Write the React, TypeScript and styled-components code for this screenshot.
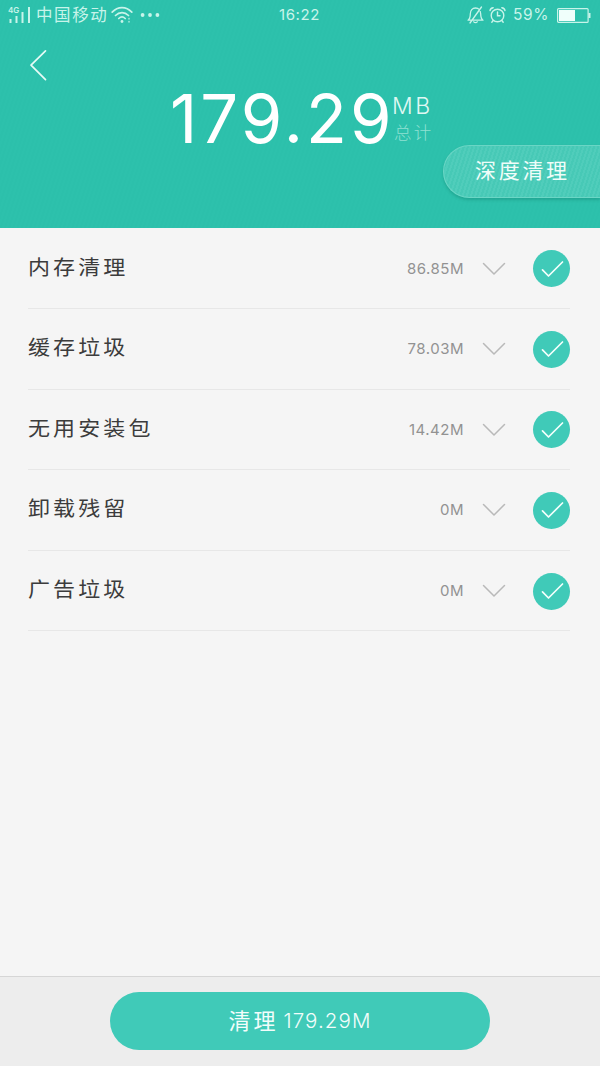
import React from 'react';
import styled, { createGlobalStyle } from 'styled-components';

const Global = createGlobalStyle`
  * { box-sizing: border-box; }
  body { margin: 0; background: #f5f5f5; font-family: Inter, "Noto Sans CJK SC", sans-serif; }
  svg { display: block; flex: none; }
`;

const Screen = styled.main`
  width: 600px;
  height: 1066px;
  display: flex;
  flex-direction: column;
  background: #f5f5f5;
  overflow: hidden;
`;

const Header = styled.header`
  position: relative;
  height: 228px;
  flex: none;
  background: repeating-linear-gradient(108deg, #2dc1ac 0 2px, #2cc0ab 2px 4px);
  color: #fff;
`;

const StatusBar = styled.div`
  display: grid;
  grid-template-columns: 1fr auto 1fr;
  align-items: center;
  height: 30px;
  padding: 0 9px 0 8px;
  color: #c8f4ea;
`;

const StatusGroup = styled.div<{ $end?: boolean }>`
  display: flex;
  align-items: center;
  justify-content: ${p => (p.$end ? 'flex-end' : 'flex-start')};
`;

const Carrier = styled.span`
  margin: 0 3px 0 5px;
  font-size: 16.5px;
  line-height: 20px;
  letter-spacing: 1.6px;
  font-weight: 400;
  white-space: nowrap;
`;

const Clock = styled.span`
  font-size: 15px;
  line-height: 20px;
  letter-spacing: 0.6px;
`;

const Percent = styled.span`
  margin: 0 8px 0 7px;
  font-size: 15.5px;
  line-height: 20px;
  letter-spacing: 0.6px;
`;

const BackButton = styled.button`
  display: block;
  margin: 18px 0 0 28px;
  padding: 0;
  border: 0;
  background: none;
  color: #e6fbf6;
`;

const Total = styled.div`
  display: flex;
  margin: 1px 0 0 170px;
  height: 72px;
`;

const TotalValue = styled.span`
  font-size: 67px;
  line-height: 72px;
  font-weight: 400;
  width: 222px;
  letter-spacing: 3.1px;
  white-space: nowrap;
`;

const TotalSide = styled.div`
  display: flex;
  flex-direction: column;
  padding-top: 11px;
`;

const Unit = styled.span`
  font-size: 23px;
  line-height: 24px;
  font-weight: 300;
  letter-spacing: 2.6px;
  color: #e0f8f3;
`;

const Caption = styled.span`
  padding-left: 2px;
  font-size: 17.5px;
  line-height: 30px;
  font-weight: 300;
  letter-spacing: 2.2px;
  color: #8fe0d2;
`;

const DeepClean = styled.button`
  position: absolute;
  right: 0;
  top: 145px;
  width: 157px;
  height: 53px;
  padding: 0 0 2px 31px;
  border: 1px solid #6ad6c5;
  border-right: 0;
  border-radius: 27px 0 0 27px;
  background: repeating-linear-gradient(108deg, #50cdbb 0 2px, #47c9b6 2px 4px);
  box-shadow: 0 2px 3px rgba(0, 90, 75, 0.25);
  color: #effdf9;
  font: 400 21px/28px Inter, "Noto Sans CJK SC", sans-serif;
  letter-spacing: 2.7px;
  text-align: left;
`;

const List = styled.ul`
  flex: 1;
  margin: 0;
  padding: 0.4px 30px 0 28px;
  list-style: none;
`;

const Row = styled.li`
  display: flex;
  align-items: center;
  height: 80.6px;
  padding-top: 1px;
  border-bottom: 1px solid #e7e7e7;
`;

const Label = styled.span`
  flex: 1;
  font-size: 22px;
  line-height: 30px;
  letter-spacing: 3.1px;
  color: #3c3c3c;
  transform: translateY(-1px) scaleY(0.93);
`;

const Size = styled.span`
  margin-right: 18px;
  font-size: 15px;
  line-height: 20px;
  letter-spacing: 0.5px;
  color: #929292;
`;

const Check = styled.span`
  display: grid;
  place-items: center;
  width: 37px;
  height: 37px;
  margin-left: 27px;
  border-radius: 50%;
  background: #40cab8;
`;

const Footer = styled.footer`
  display: flex;
  justify-content: center;
  height: 90px;
  padding-top: 15px;
  border-top: 1px solid #d6d6d6;
  background: #ededed;
`;

const CleanButton = styled.button`
  display: flex;
  align-items: center;
  justify-content: center;
  width: 380px;
  height: 58px;
  padding: 0;
  border: 0;
  border-radius: 29px;
  background: #40cab8;
  color: #f2fdfb;
  font: 400 20.5px/28px Inter, "Noto Sans CJK SC", sans-serif;
`;

const CleanWord = styled.span`
  font-size: 22px;
  letter-spacing: 3px;
  margin-right: 5px;
`;

const CleanSize = styled.span`
  font-weight: 300;
  letter-spacing: 1.1px;
`;

const Signal = () => (
  <svg width="23" height="18" viewBox="0 0 23 18" fill="currentColor">
    <text x="0" y="6.5" fontSize="8" fontWeight="600" fontFamily="Inter, sans-serif">4G</text>
    <path d="M1.5 13h2v4h-2zM7.5 10h2v7h-2zM13.5 6h2v11h-2zM20 1h2v16h-2z" />
  </svg>
);

const Wifi = () => (
  <svg width="22" height="18" viewBox="0 0 22 18" fill="none" stroke="currentColor" strokeWidth="1.7" strokeLinecap="round">
    <path d="M1.2 6.2C6.8.2 15.2.2 20.8 6.2M4.5 9.5c3.8-3.9 9.2-3.9 13 0M7.8 12.5c2-1.9 4.4-1.9 6.4 0" />
    <circle cx="11" cy="15.5" r="1.4" fill="currentColor" stroke="none" />
    <path d="M18 12.5v.4M18 15.5v.4" strokeWidth="1.6" opacity=".75" />
  </svg>
);

const DotsIcon = styled.svg`
  margin-left: 7px;
`;

const Dots = () => (
  <DotsIcon width="20" height="4" viewBox="0 0 20 4" fill="currentColor">
    <circle cx="2.6" cy="2" r="1.9" /><circle cx="10" cy="2" r="1.9" /><circle cx="17.4" cy="2" r="1.9" />
  </DotsIcon>
);

const BellOff = () => (
  <svg width="17" height="18" viewBox="0 0 17 18" fill="none" stroke="currentColor" strokeWidth="1.3" strokeLinecap="round" strokeLinejoin="round">
    <path d="M1 14.2h15c-2-1.3-2.3-2.7-2.3-6.2 0-3.8-2-6-5.2-6S3.3 4.2 3.3 8c0 3.5-.3 4.9-2.3 6.2zM6.8 15.8c.8 1 2.6 1 3.4 0M14.5 1 3 17" />
  </svg>
);

const AlarmIcon = styled.svg`
  margin-left: 5px;
`;

const Alarm = () => (
  <AlarmIcon width="17" height="18" viewBox="0 0 17 18" fill="none" stroke="currentColor" strokeWidth="1.4" strokeLinecap="round">
    <circle cx="8.5" cy="9.5" r="6.3" />
    <path d="M8.5 6v3.8H11M1 4.5Q1.5 2 4.2 1.7M16 4.5Q15.5 2 12.8 1.7M4.2 14.5 2.8 16.3M12.8 14.5l1.4 1.8" />
  </AlarmIcon>
);

const Battery = () => (
  <svg width="34" height="15" viewBox="0 0 34 15">
    <rect x=".6" y=".6" width="30.5" height="13.8" rx="1" fill="none" stroke="currentColor" strokeWidth="1.2" />
    <rect x="2" y="2" width="16" height="11" fill="#f0fffb" />
    <path d="M31.5 5h2v5h-2z" fill="currentColor" />
  </svg>
);

const rows = [
  { label: '内存清理', size: '86.85M' },
  { label: '缓存垃圾', size: '78.03M' },
  { label: '无用安装包', size: '14.42M' },
  { label: '卸载残留', size: '0M' },
  { label: '广告垃圾', size: '0M' },
];

export default function App() {
  return (
    <Screen>
      <Global />
      <Header>
        <StatusBar>
          <StatusGroup><Signal /><Carrier>中国移动</Carrier><Wifi /><Dots /></StatusGroup>
          <Clock>16:22</Clock>
          <StatusGroup $end><BellOff /><Alarm /><Percent>59%</Percent><Battery /></StatusGroup>
        </StatusBar>
        <BackButton aria-label="返回">
          <svg width="20" height="34" viewBox="0 0 20 34" fill="none" stroke="currentColor" strokeWidth="1.7" strokeLinecap="round" strokeLinejoin="round">
            <path d="M17.5 2.8 3 17.2l14.5 14.5" />
          </svg>
        </BackButton>
        <Total>
          <TotalValue>179.29</TotalValue>
          <TotalSide><Unit>MB</Unit><Caption>总计</Caption></TotalSide>
        </Total>
        <DeepClean>深度清理</DeepClean>
      </Header>
      <List>
        {rows.map(row => (
          <Row key={row.label}>
            <Label>{row.label}</Label>
            <Size>{row.size}</Size>
            <svg width="24" height="14" viewBox="0 0 24 14" fill="none" stroke="#b9b9b9" strokeWidth="1.5" strokeLinecap="round" strokeLinejoin="round">
              <path d="M1.5 1.5 12 12 22.5 1.5" />
            </svg>
            <Check>
              <svg width="24" height="18" viewBox="0 0 24 18" fill="none" stroke="#f4fffc" strokeWidth="1.7" strokeLinecap="round" strokeLinejoin="round">
                <path d="M2.5 9.8 8.5 16 22.5 2" />
              </svg>
            </Check>
          </Row>
        ))}
      </List>
      <Footer>
        <CleanButton><CleanWord>清理</CleanWord><CleanSize>179.29M</CleanSize></CleanButton>
      </Footer>
    </Screen>
  );
}
